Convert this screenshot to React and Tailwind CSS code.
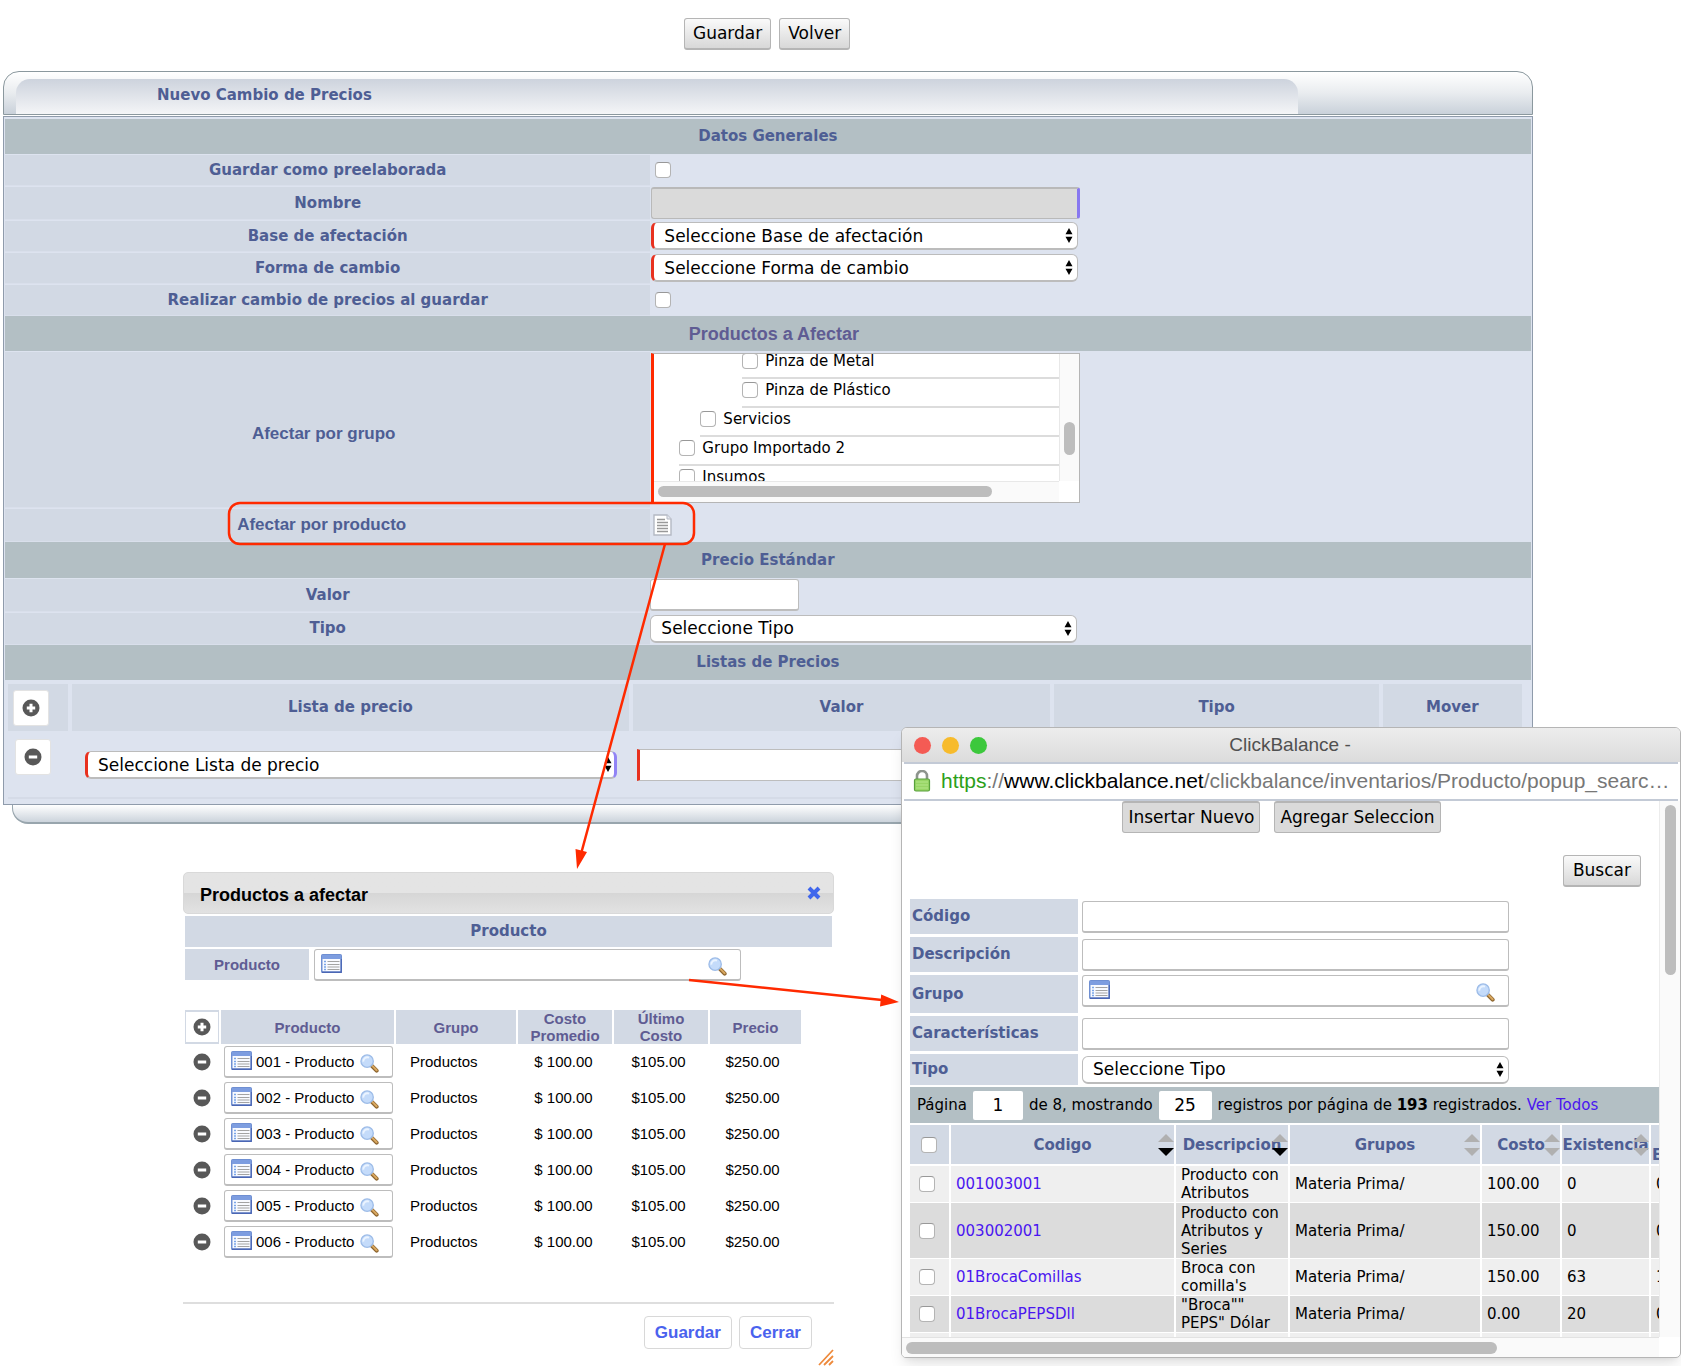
import React, { useState } from "react";

const precios = ["001", "002", "003", "004", "005", "006"];

const grupos = [
    { id: "metal", name: "Pinza de Metal", indent: "ml-[88px]" },
    { id: "plastico", name: "Pinza de Plástico", indent: "ml-[88px]" },
    { id: "servicios", name: "Servicios", indent: "ml-[46px]" },
    { id: "importado", name: "Grupo Importado 2", indent: "ml-[25px]" },
    { id: "insumos", name: "Insumos", indent: "ml-[25px]" },
];

const registros = [
    { codigo: "001003001", desc: "Producto con Atributos", costo: "100.00", existencia: "0", extra: "0", height: "h-[37px]" },
    { codigo: "003002001", desc: "Producto con Atributos y Series", costo: "150.00", existencia: "0", extra: "0", height: "h-14" },
    { codigo: "01BrocaComillas", desc: "Broca con comilla's", costo: "150.00", existencia: "63", extra: "1", height: "h-[37px]" },
    { codigo: "01BrocaPEPSDll", desc: "\"Broca\"\" PEPS\" Dólar", costo: "0.00", existencia: "20", extra: "0", height: "h-[37px]" },
];

const columnas = [
    { name: "Codigo", down: "#000" },
    { name: "Descripcion", down: "#000" },
    { name: "Grupos", down: "#b0b0b0" },
    { name: "Costo", down: "#b0b0b0" },
    { name: "Existencia", down: "#b0b0b0" },
];

const Checkbox = ({ id, label, className = "" }) => (
    <input
        id={id}
        type="checkbox"
        aria-label={label}
        className={`block appearance-none w-4 h-4 shrink-0 rounded-[4px] border border-[#b4b4b4] border-t-[#989898] bg-white checked:bg-blue-500 ${className}`}
    />
);

const Select = ({ id, label, text, className = "", edge = "" }) => (
    <div className={`relative ${className}`}>
        <select
            id={id}
            aria-label={label}
            className={`block appearance-none w-full h-7 pl-[10px] pr-6 rounded-md border border-b-2 border-[#bcbcbc] bg-white text-[17px] leading-6 text-black ${edge}`}
        >
            <option>{text}</option>
        </select>
        <svg className="absolute right-[5px] top-[6px] pointer-events-none" width="8" height="15" viewBox="0 0 8 15">
            <path d="M4 0l3.500 6.200H.5zM4 15L.5 8.800h7z" fill="#000" />
        </svg>
    </div>
);

const ListIcon = () => (
    <svg width="21" height="19" viewBox="0 0 21 19" className="shrink-0 mb-[3px]">
        <rect x=".75" y=".75" width="19.5" height="17.5" rx="1" fill="#f8faff" stroke="#6f8fd2" strokeWidth="1.5" />
        <rect x="1" y="1" width="19" height="4" fill="#7d9de0" />
        <path d="M3 7.5h2M3 10.5h2M3 13h2M3 15.5h2" stroke="#7ba6e8" strokeWidth="1.3" />
        <path d="M6.5 7.5h12M6.5 10.5h12M6.5 13h12M6.5 15.5h12" stroke="#a3a3a3" strokeWidth="1.2" />
        <path d="M.75 18.25h19.5V5" fill="none" stroke="#4a66b4" strokeWidth="1.3" />
    </svg>
);

const SearchIcon = () => (
    <svg width="19" height="19" viewBox="0 0 20 20" className="shrink-0">
        <path d="M12.5 12.5l5 5" stroke="#8d652f" strokeWidth="4.2" strokeLinecap="round" />
        <path d="M13 12.5l4.5 4.5" stroke="#d9a860" strokeWidth="2.2" strokeLinecap="round" />
        <circle cx="7.5" cy="7.5" r="6.5" fill="#c4dbfa" stroke="#9dbce8" strokeWidth="1.4" />
        <path d="M3.5 8a4.2 4.2 0 0 1 6-4.2" fill="none" stroke="#ebf4ff" strokeWidth="2" />
    </svg>
);

const RoundIcon = ({ plus }) => (
    <svg width="18" height="18" viewBox="0 0 18 18">
        <circle cx="9" cy="9" r="8.5" fill="#585858" />
        <path d={plus ? "M9 4.8v8.4M4.8 9h8.4" : "M4.8 9h8.4"} stroke="#fff" strokeWidth="3" />
    </svg>
);

const SortIcon = ({ down }) => (
    <svg className="absolute right-0 top-[9px]" width="16" height="22" viewBox="0 0 16 22">
        <path d="M8 0l8 8H0z" fill="#b0b0b0" />
        <path d="M8 22l8-8H0z" fill={down} />
    </svg>
);

const SectionTitle = ({ children, className = "" }) => (
    <h2 className={`h-[35px] flex items-center justify-center bg-[#b3bfc4] text-[15px] font-bold ${className}`}>{children}</h2>
);

const Row = ({ id, label, height, labelClass = "", children }) => (
    <div className={`flex ${height}`}>
        <label
            htmlFor={id}
            className={`w-[42.3%] mt-px flex items-center justify-center bg-[#d2d9e4] border-b border-[#d9dfeb] text-[15px] font-bold ${labelClass}`}
        >
            {label}
        </label>
        <div className="flex-1 flex items-center">{children}</div>
    </div>
);

const SearchField = ({ id, label, value = "", className = "" }) => (
    <div className={`flex items-center h-8 rounded-[3px] border border-b-2 border-[#bdbdbd] bg-white ${className}`}>
        <ListIcon />
        <input id={id} aria-label={label} defaultValue={value} className="flex-1 min-w-0 h-full pl-1 outline-none text-[15px] text-black" />
        <button aria-label={`Buscar ${label}`} className="mt-1"><SearchIcon /></button>
    </div>
);

const PriceForm = () => (
    <div className="ml-[3px] w-[91%] font-['DejaVu_Sans',sans-serif] text-[#4e5e94]">
        <div className="h-[44px] pt-[7px] pl-3 rounded-t-[16px] border border-[#8b989e] bg-linear-to-b from-white via-[#e9ecef] to-[#c9d1da]">
            <h1 className="h-full w-[84.6%] pl-[141px] flex items-center rounded-t-[14px] bg-linear-to-b from-[#cdd3dd] to-[#f4f5f7] text-[15px] font-bold pb-[2px]">
                Nuevo Cambio de Precios
            </h1>
        </div>
        <div className="mt-px pt-[2px] px-px border border-[#8f9bab] bg-[#dde3ef]">
            <SectionTitle>Datos Generales</SectionTitle>
            <Row id="preelaborada" label="Guardar como preelaborada" height="h-8">
                <Checkbox id="preelaborada" className="ml-[5px]" />
            </Row>
            <Row id="nombre" label="Nombre" height="h-[34px]">
                <input id="nombre" disabled className="w-[429px] h-8 ml-px rounded-[3px] border border-t-2 border-[#b9b9b9] border-r-3 border-r-[#8878f0] bg-[#dadada]" />
            </Row>
            <Row id="base" label="Base de afectación" height="h-8">
                <Select id="base" text="Seleccione Base de afectación" className="w-[427px] ml-px" edge="border-l-3 border-l-[#e8311f]" />
            </Row>
            <Row id="forma" label="Forma de cambio" height="h-8">
                <Select id="forma" text="Seleccione Forma de cambio" className="w-[427px] ml-px" edge="border-l-3 border-l-[#e8311f]" />
            </Row>
            <Row id="realizar" label="Realizar cambio de precios al guardar" height="h-8">
                <Checkbox id="realizar" className="ml-[5px]" />
            </Row>
            <SectionTitle className="font-['Liberation_Sans',sans-serif] text-lg! text-[#5f5c93] pl-3">Productos a Afectar</SectionTitle>
            <Row id="metal" label="Afectar por grupo" height="h-[157px]" labelClass="font-['Liberation_Sans',sans-serif] text-[17px]! pr-2 pt-2">
                <div className="w-[429px] h-[150px] ml-px mb-1 flex flex-col border border-[#b5b5b5] border-l-3 border-l-[#ff2a00] bg-white">
                    <div className="flex flex-1 min-h-0">
                        <div className="flex-1 overflow-hidden">
                            <ul className="-mt-1">
                                {grupos.map((g) => (
                                    <li key={g.id} className={`h-[29px] flex items-start gap-[7px] pt-[3px] border-b-2 border-[#dcdcdc] text-black ${g.indent}`}>
                                        <Checkbox id={g.id} />
                                        <label htmlFor={g.id} className="text-[15px] leading-4">{g.name}</label>
                                    </li>
                                ))}
                            </ul>
                        </div>
                        <div className="w-5 border-l border-[#e8e8e8] bg-[#fafafa] flex justify-center">
                            <div className="mt-[68px] w-[11px] h-[33px] rounded-full bg-[#bdbdbd]" />
                        </div>
                    </div>
                    <div className="h-[21px] mr-5 pl-1 flex items-center border-t border-[#e8e8e8] bg-[#fafafa]">
                        <div className="w-[334px] h-[11px] rounded-full bg-[#bdbdbd]" />
                    </div>
                </div>
            </Row>
            <Row id="producto-doc" label="Afectar por producto" height="h-[34px]" labelClass="font-['Liberation_Sans',sans-serif] text-[17px]! pr-3">
                <button id="producto-doc" aria-label="Afectar por producto" className="ml-[3px]">
                    <svg width="19" height="22" viewBox="0 0 19 22">
                        <path d="M1 1h13l4 4v16H1z" fill="#fff" stroke="#b4b9c4" strokeWidth="1.4" />
                        <path d="M14 1v4h4" fill="#e5e8ef" stroke="#b4b9c4" />
                        <path d="M4 5.5h8M4 8.5h11M4 11.5h11M4 14.5h11M4 17.5h11" stroke="#999" strokeWidth="1.3" />
                    </svg>
                </button>
            </Row>
            <SectionTitle className="h-9!">Precio Estándar</SectionTitle>
            <Row id="valor" label="Valor" height="h-[34px]">
                <input id="valor" className="w-[149px] h-8 rounded-[3px] border border-b-2 border-[#bdbdbd] bg-white" />
            </Row>
            <Row id="tipo" label="Tipo" height="h-[33px]">
                <Select id="tipo" text="Seleccione Tipo" className="w-[427px]" />
            </Row>
            <SectionTitle>Listas de Precios</SectionTitle>
            <div className="pt-1 pb-[5px] pl-[3px] pr-[5px]">
                <table className="w-full table-fixed text-[15px]">
                    <thead>
                        <tr className="h-12 [&>th]:bg-[#d2d9e4] [&>th]:border-r-4 [&>th]:border-b-2 [&>th]:border-[#dde3ef]">
                            <th className="w-[62px] pl-[5px]">
                                <button aria-label="Agregar" className="flex items-center justify-center w-9 h-9 rounded-[3px] border border-[#e3e3e3] bg-white"><RoundIcon plus /></button>
                            </th>
                            <th className="w-[37%]">Lista de precio</th>
                            <th className="w-[27.8%]">Valor</th>
                            <th className="w-[21.7%]">Tipo</th>
                            <th>Mover</th>
                        </tr>
                    </thead>
                    <tbody>
                        <tr className="h-[66px] border-b-2 border-[#d5dbe7]">
                            <td className="align-top pl-[7px] pt-[6px]">
                                <button aria-label="Quitar" className="flex items-center justify-center w-9 h-9 rounded-[3px] border border-[#e3e3e3] bg-white"><RoundIcon /></button>
                            </td>
                            <td className="pl-[15px] pr-[14px]">
                                <Select label="Lista de precio" text="Seleccione Lista de precio" edge="border-x-3 border-l-[#e8311f] border-r-[#9184f5]" />
                            </td>
                            <td className="pl-[6px]">
                                <input aria-label="Valor" className="block w-full h-8 border border-[#bdbdbd] border-l-3 border-l-[#e8311f] bg-white" />
                            </td>
                            <td />
                            <td />
                        </tr>
                    </tbody>
                </table>
            </div>
        </div>
        <div className="h-[19px] mx-[9px] rounded-b-[16px] border border-b-2 border-t-0 border-[#98a5ad] bg-linear-to-b from-white to-[#ccd4dc]" />
    </div>
);

const ProductsDialog = ({ onClose }) => (
    <section className="ml-[183px] mt-12 w-[651px] font-['Liberation_Sans',sans-serif] text-[15px] text-black">
        <header className="h-[42px] pl-4 pr-3 flex items-center justify-between rounded-[5px] border border-[#d9d9d9] bg-linear-to-b from-[#e4e4e4] from-50% via-[#d6d6d6] via-50% to-[#e2e2e2]">
            <h2 className="pt-1 text-lg font-bold">Productos a afectar</h2>
            <button aria-label="Cerrar ventana" onClick={onClose}>
                <svg width="14" height="14" viewBox="0 0 14 14"><path d="M2 2l10 10M12 2L2 12" stroke="#3f66ec" strokeWidth="4" /></svg>
            </button>
        </header>
        <h3 className="mt-[2px] mx-[2px] h-[31px] flex items-center justify-center bg-[#d2d9e4] font-['DejaVu_Sans',sans-serif] text-[15px] font-bold text-[#4e5e94]">Producto</h3>
        <div className="mt-[2px] ml-[2px] flex gap-[5px]">
            <label htmlFor="producto" className="w-[124px] h-[31px] flex items-center justify-center pt-px bg-[#d2d9e4] font-bold text-[#5f5c93]">Producto</label>
            <SearchField id="producto" label="Producto" className="w-[427px] pl-[6px] pr-[13px]" />
        </div>
        <table className="mt-[29px] w-[620px] table-fixed">
            <thead>
                <tr className="h-[34px] leading-[17px] text-[#5f5c93] [&>th]:bg-[#d2d9e4] [&>th]:border-x-2 [&>th]:border-white [&>th]:p-0">
                    <th className="w-9">
                        <button aria-label="Agregar" className="flex items-center justify-center w-full h-8 border border-[#d2d9e4] bg-white"><RoundIcon plus /></button>
                    </th>
                    <th className="w-[175px]">Producto</th>
                    <th className="w-[122px]">Grupo</th>
                    <th className="w-24">Costo Promedio</th>
                    <th className="w-24">Último<br />Costo</th>
                    <th>Precio</th>
                </tr>
            </thead>
            <tbody>
                {precios.map((id) => (
                    <tr key={id} className="h-9">
                        <td className="p-0 pl-[9px]">
                            <button aria-label={`Quitar ${id}`} className="block"><RoundIcon /></button>
                        </td>
                        <td className="pl-1 pt-[2px] pb-[2px]">
                            <SearchField id={`p-${id}`} label={`Producto ${id}`} value={`${id} - Producto`} className="w-[169px] pl-[6px] pr-[13px]" />
                        </td>
                        <td className="pl-[15px]">Productos</td>
                        <td className="text-center pr-[3px]">$ 100.00</td>
                        <td className="text-center pr-[5px]">$105.00</td>
                        <td className="text-center pr-[6px]">$250.00</td>
                    </tr>
                ))}
            </tbody>
        </table>
        <footer className="mt-[42px] pt-3 pr-[22px] flex justify-end gap-[7px] border-t-2 border-[#dedede] text-[17px] font-bold text-[#4a62ee]">
            <button className="h-[33px] px-[10px] rounded-[4px] border border-[#d8d8d8] bg-white">Guardar</button>
            <button onClick={onClose} className="h-[33px] px-[10px] rounded-[4px] border border-[#d8d8d8] bg-white">Cerrar</button>
        </footer>
        <svg className="ml-auto" width="16" height="17" viewBox="0 0 16 17">
            <path d="M1 16L15 1M6 16l9-9M11 16l4-4" stroke="#ee8a3c" strokeWidth="1.8" />
        </svg>
    </section>
);

const SearchPopup = () => {
    const labelCell = "flex items-center pl-[2px] bg-[#d2d9e4] text-[15px] font-bold text-[#4e5e94]";
    const box = "h-8 rounded-[3px] border border-b-2 border-[#bdbdbd] bg-white";

    return (
        <section className="absolute right-0 top-[727px] w-[780px] rounded-t-[6px] rounded-b-[5px] border border-[#b5b5b5] bg-white shadow-lg overflow-hidden font-['DejaVu_Sans',sans-serif] text-[15px] text-black">
            <header className="relative h-[34px] flex items-center gap-[11px] pl-3 bg-linear-to-b from-[#ededed] to-[#dcdcdc]">
                <span className="w-[17px] h-[17px] rounded-full bg-[#f45b54]" />
                <span className="w-[17px] h-[17px] rounded-full bg-[#f7bb2c]" />
                <span className="w-[17px] h-[17px] rounded-full bg-[#3cc83c]" />
                <h2 className="flex-1 pr-[98px] text-center font-['Liberation_Sans',sans-serif] text-[19px] text-[#505050]">ClickBalance -</h2>
            </header>
            <div className="h-[39px] mx-[2px] px-[9px] pb-[2px] flex items-center gap-[10px] border-y-2 border-[#c3cad6] bg-white font-['Liberation_Sans',sans-serif] text-[21px] text-[#777]">
                <svg width="18" height="22" viewBox="0 0 18 22" className="shrink-0">
                    <path d="M4 10V6a5 5 0 0 1 10 0v4" fill="none" stroke="#8d948d" strokeWidth="2.6" />
                    <rect x="1.5" y="9" width="15" height="12" rx="1.5" fill="#97d565" stroke="#58a03c" strokeWidth="1.2" />
                    <path d="M3 12h12M3 15h12M3 18h12" stroke="#b4e68a" />
                </svg>
                <p className="whitespace-nowrap"><span className="text-[#2ca019]">https</span>://<span className="text-black">www.clickbalance.net</span>/clickbalance/inventarios/Producto/popup_searc…</p>
            </div>
            <div className="flex h-[536px]">
                <div className="flex-1 min-w-0 overflow-hidden pl-2">
                    <div className="flex justify-center gap-[14px] pr-[6px] text-[17px]">
                        <button className="h-8 px-[5px] rounded-[3px] border border-t-2 border-[#b5b5b5] bg-[#dadada]">Insertar Nuevo</button>
                        <button className="h-8 px-[5px] rounded-[3px] border border-t-2 border-[#b5b5b5] bg-[#dadada]">Agregar Seleccion</button>
                    </div>
                    <div className="mt-[22px] pr-[18px] flex justify-end text-[17px]">
                        <button className="h-8 px-[9px] rounded-[3px] border border-b-2 border-[#b5b5b5] bg-linear-to-b from-[#fafafa] to-[#d8d8d8]">Buscar</button>
                    </div>
                    <div className="mt-3 grid grid-cols-[168px_427px] gap-x-1 gap-y-[3px] items-center">
                        <label htmlFor="codigo" className={`h-[35px] ${labelCell}`}>Código</label>
                        <input id="codigo" className={box} />
                        <label htmlFor="descripcion" className={`h-[35px] ${labelCell}`}>Descripción</label>
                        <input id="descripcion" className={box} />
                        <label htmlFor="grupo" className={`h-[38px] ${labelCell}`}>Grupo</label>
                        <SearchField id="grupo" label="Grupo" className="self-start pl-[6px] pr-[13px]" />
                        <label htmlFor="caracteristicas" className={`h-[35px] ${labelCell}`}>Características</label>
                        <input id="caracteristicas" className={box} />
                        <label htmlFor="tipo-producto" className={`h-[31px] ${labelCell}`}>Tipo</label>
                        <Select id="tipo-producto" text="Seleccione Tipo" />
                    </div>
                    <div className="mt-[2px] h-9 pl-[7px] flex items-center bg-[#b3bfc4] whitespace-nowrap">
                        <label htmlFor="pagina">Página</label>
                        <input id="pagina" defaultValue="1" className="w-[50px] h-[29px] mx-[6px] rounded-[2px] bg-white text-center text-[17px]" />
                        <label htmlFor="cantidad">de 8, mostrando</label>
                        <input id="cantidad" defaultValue="25" className="w-[53px] h-[29px] mx-[6px] rounded-[2px] bg-white text-center text-[17px]" />
                        <span>registros por página de <b>193</b> registrados. <a href="#todos" className="text-[#4a16f0]">Ver Todos</a></span>
                    </div>
                    <table className="mt-[2px] w-[800px] table-fixed leading-[18px] [&_th]:border-r-2 [&_th]:border-b-2 [&_th]:border-white [&_td]:border-r-2 [&_td]:border-b [&_td]:border-white">
                        <colgroup>
                            <col className="w-10" />
                            <col className="w-[225px]" />
                            <col className="w-[114px]" />
                            <col className="w-48" />
                            <col className="w-20" />
                            <col className="w-[89px]" />
                            <col />
                        </colgroup>
                        <thead>
                            <tr className="h-10 bg-[#d2d9e4] text-[#4e5e94]">
                                <th className="p-0 pl-[11px]"><Checkbox label="Seleccionar todos" /></th>
                                {columnas.map((c) => (
                                    <th key={c.name} className="relative p-0">
                                        {c.name}
                                        <SortIcon down={c.down} />
                                    </th>
                                ))}
                                <th className="p-0 pl-px text-left align-bottom">E</th>
                            </tr>
                        </thead>
                        <tbody>
                            {registros.map((r) => (
                                <tr key={r.codigo} className={`odd:bg-[#efefef] even:bg-[#dcdcdc] ${r.height}`}>
                                    <td className="p-0 pl-[9px]"><Checkbox label={r.codigo} /></td>
                                    <td className="p-0 pl-[5px]"><a href="#producto" className="text-[#4a16f0]">{r.codigo}</a></td>
                                    <td className="p-0 pl-[5px]">{r.desc}</td>
                                    <td className="p-0 pl-[5px]">Materia Prima/</td>
                                    <td className="p-0 pl-[5px]">{r.costo}</td>
                                    <td className="p-0 pl-[5px]">{r.existencia}</td>
                                    <td className="p-0 pl-[5px]">{r.extra}</td>
                                </tr>
                            ))}
                            <tr className="h-9 bg-[#efefef]">
                                <td /><td /><td /><td /><td /><td /><td />
                            </tr>
                        </tbody>
                    </table>
                </div>
                <div className="w-[21px] flex justify-center border-l border-[#ececec] bg-[#fafafa]">
                    <div className="mt-1 w-[11px] h-[170px] rounded-full bg-[#bdbdbd]" />
                </div>
            </div>
            <div className="h-5 mr-[21px] pl-1 flex items-center border-t border-[#e2e2e2] bg-[#fafafa]">
                <div className="w-[591px] h-3 rounded-full bg-[#bdbdbd]" />
            </div>
        </section>
    );
};

// Red callout and the arrows that link the windows
const Callouts = () => (
    <svg className="absolute inset-0 w-full h-full pointer-events-none" fill="none" stroke="#ff2a00" strokeWidth="2.5">
        <rect x="229" y="503" width="465" height="41" rx="11" />
        <path d="M665 544L581 854M689 980L882 1000" />
        <path d="M577 869l-1.5-20 11.500 3zM899 1002l-19 4.500 1.200-12z" fill="#ff2a00" stroke="none" />
    </svg>
);

const App = () => {
    const [showProducts, setShowProducts] = useState(true);

    return (
        <main className="relative bg-white overflow-hidden">
            <div className="pt-[18px] pb-[21px] pl-[684px] flex gap-2 font-['DejaVu_Sans',sans-serif] text-[17px] text-black">
                <button className="h-8 px-2 rounded-[3px] border border-b-2 border-[#b5b5b5] bg-linear-to-b from-[#fafafa] to-[#d8d8d8]">Guardar</button>
                <button className="h-8 px-2 rounded-[3px] border border-b-2 border-[#b5b5b5] bg-linear-to-b from-[#fafafa] to-[#d8d8d8]">Volver</button>
            </div>
            <PriceForm />
            {showProducts && <ProductsDialog onClose={() => setShowProducts(false)} />}
            <SearchPopup />
            <Callouts />
        </main>
    );
};

export default App;
